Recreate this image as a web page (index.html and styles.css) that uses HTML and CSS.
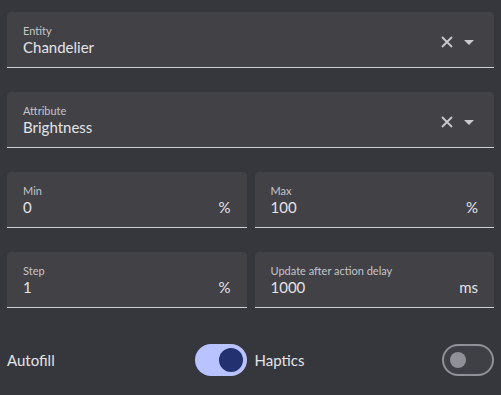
FILE: index.html
```html
<!DOCTYPE html>
<html lang="en">
<head>
  <meta charset="UTF-8" />
  <meta name="viewport" content="width=device-width, initial-scale=1.0"/>
  <title>Slider settings</title>
  <link rel="stylesheet" href="styles.css">
</head>
<body>
  <div class="form">
    <div class="field">
      <div class="field-text">
        <span class="label">Entity</span>
        <span class="value">Chandelier</span>
      </div>
      <div class="icons">
        <svg class="clear" width="12" height="12" viewBox="0 0 12 12">
          <path d="M1 1 L11 11 M11 1 L1 11" stroke="#c9c9ce" stroke-width="1.8" fill="none"/>
        </svg>
        <svg class="drop" width="10" height="5" viewBox="0 0 10 5">
          <path d="M0 0 L10 0 L5 5 Z" fill="#c9c9ce"/>
        </svg>
      </div>
    </div>

    <div class="field">
      <div class="field-text">
        <span class="label">Attribute</span>
        <span class="value">Brightness</span>
      </div>
      <div class="icons">
        <svg class="clear" width="12" height="12" viewBox="0 0 12 12">
          <path d="M1 1 L11 11 M11 1 L1 11" stroke="#c9c9ce" stroke-width="1.8" fill="none"/>
        </svg>
        <svg class="drop" width="10" height="5" viewBox="0 0 10 5">
          <path d="M0 0 L10 0 L5 5 Z" fill="#c9c9ce"/>
        </svg>
      </div>
    </div>

    <div class="pair">
      <div class="field">
        <div class="field-text">
          <span class="label">Min</span>
          <span class="value">0</span>
        </div>
        <span class="suffix">%</span>
      </div>
      <div class="field">
        <div class="field-text">
          <span class="label">Max</span>
          <span class="value">100</span>
        </div>
        <span class="suffix">%</span>
      </div>
    </div>

    <div class="pair">
      <div class="field">
        <div class="field-text">
          <span class="label">Step</span>
          <span class="value">1</span>
        </div>
        <span class="suffix">%</span>
      </div>
      <div class="field">
        <div class="field-text">
          <span class="label">Update after action delay</span>
          <span class="value">1000</span>
        </div>
        <span class="suffix">ms</span>
      </div>
    </div>

    <div class="pair switches">
      <div class="switch-row">
        <span class="switch-label">Autofill</span>
        <span class="switch on"><span class="knob"></span></span>
      </div>
      <div class="switch-row">
        <span class="switch-label">Haptics</span>
        <span class="switch off"><span class="knob"></span></span>
      </div>
    </div>
  </div>
</body>
</html>
```

FILE: styles.css
```css
body {
  font-family: 'Lato', sans-serif;
  background-color: #36373c;
  color: #e4e4e9;
  margin: 0;
  padding: 12px 7px 0 7px;
}

.form {
  display: flex;
  flex-direction: column;
  gap: 24px;
}

.field {
  display: flex;
  align-items: center;
  height: 56px;
  box-sizing: border-box;
  padding: 12px 16px 10px 16px;
  background-color: #414146;
  border-radius: 4px 4px 0 0;
  border-bottom: 1px solid #cfcfd4;
}

.field-text {
  flex: 1;
  display: flex;
  flex-direction: column;
  align-self: flex-start;
  min-width: 0;
}

.label {
  font-size: 11px;
  line-height: 13px;
  color: #c5c5cb;
}

.value {
  font-size: 15px;
  line-height: 20px;
  color: #e4e4e9;
}

.suffix {
  font-size: 15px;
  line-height: 20px;
  align-self: flex-end;
  color: #e4e4e9;
}

.icons {
  display: flex;
  align-items: center;
  gap: 11px;
  margin-top: 3px;
  margin-right: 4px;
}

.icons svg {
  display: block;
}

.pair {
  display: grid;
  grid-template-columns: 1fr 1fr;
  gap: 8px;
}

.switches {
  margin-top: 12px;
}

.switch-row {
  display: flex;
  align-items: center;
  justify-content: space-between;
}

.switch-label {
  font-size: 15px;
  color: #e4e4e9;
}

.switch {
  display: flex;
  align-items: center;
  width: 52px;
  height: 32px;
  box-sizing: border-box;
  border-radius: 16px;
}

.switch.on {
  background-color: #b8c3ff;
  justify-content: flex-end;
  padding-right: 4px;
}

.switch.on .knob {
  width: 24px;
  height: 24px;
  border-radius: 50%;
  background-color: #243170;
}

.switch.off {
  background-color: #3f4046;
  border: 2px solid #8f9098;
  padding-left: 6px;
}

.switch.off .knob {
  width: 16px;
  height: 16px;
  border-radius: 50%;
  background-color: #8f9098;
}
```
